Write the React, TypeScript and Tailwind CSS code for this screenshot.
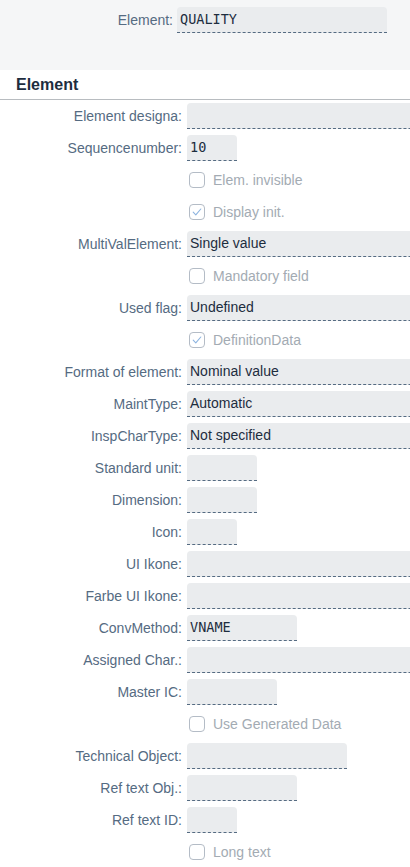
import React from "react";

const font = { fontFamily: '"Liberation Sans", Arial, sans-serif' };

function Label({ text }: { text: string }) {
  return (
    <div className="w-[183px] shrink-0 pr-[1px] text-right text-[14px] text-[#556b82] whitespace-nowrap">
      {text}
    </div>
  );
}

function Input({ value, w, mono }: { value?: string; w: string; mono?: boolean }) {
  return (
    <div
      className={`${w} shrink-0 ml-[4px] h-[26px] rounded-t-[4px] bg-[#eaecee] border-b border-dashed border-[#556b82] flex items-center pl-[3px] text-[#1d2d3e] ${
        mono ? "text-[14px]" : "text-[14px]"
      }`}
      style={mono ? { fontFamily: '"DejaVu Sans Mono", "Liberation Mono", monospace', fontSize: "13.5px" } : undefined}
    >
      {value}
    </div>
  );
}

function FieldRow({ label, value, w, mono }: { label: string; value?: string; w: string; mono?: boolean }) {
  return (
    <div className="h-[32px] flex items-center">
      <Label text={`${label}:`} />
      <Input value={value} w={w} mono={mono} />
    </div>
  );
}

function CheckRow({ label, checked }: { label: string; checked?: boolean }) {
  return (
    <div className="h-[32px] flex items-center">
      <div className="w-[189px] shrink-0" />
      <div className="w-[16px] h-[16px] rounded-[4px] border border-[#b4bcc6] bg-white flex items-center justify-center">
        {checked && (
          <svg width="12" height="12" viewBox="0 0 12 12">
            <path d="M2.2 6.2 L4.8 8.8 L9.8 3" fill="none" stroke="#8db4e0" strokeWidth="1.1" strokeLinecap="round" strokeLinejoin="round" />
          </svg>
        )}
      </div>
      <div className="ml-[8px] text-[14px] text-[#a3abb3]">{label}</div>
    </div>
  );
}

const WIDE = "w-[300px]";

export default function App() {
  return (
    <div className="w-[410px] h-[867px] overflow-hidden bg-white" style={font}>
      <div className="h-[70px] bg-[#f5f6f7] pt-[7px]">
        <div className="flex items-center h-[26px]">
          <div className="w-[173px] shrink-0 text-right text-[14px] text-[#556b82]">Element:</div>
          <div
            className="w-[210px] ml-[4px] h-[26px] rounded-t-[4px] bg-[#eaecee] border-b border-dashed border-[#556b82] flex items-center pl-[3px] text-[#1d2d3e]"
            style={{ fontFamily: '"DejaVu Sans Mono", "Liberation Mono", monospace', fontSize: "13.5px" }}
          >
            QUALITY
          </div>
        </div>
      </div>
      <div className="h-[30px] border-b border-[#b8bcc0] flex items-center pl-[16px] text-[16px] font-bold text-[#1d2d3e]">
        Element
      </div>
      <div className="flex flex-col">
        <FieldRow label="Element designa" w={WIDE} />
        <FieldRow label="Sequencenumber" value="10" w="w-[50px]" mono />
        <CheckRow label="Elem. invisible" />
        <CheckRow label="Display init." checked />
        <FieldRow label="MultiValElement" value="Single value" w={WIDE} />
        <CheckRow label="Mandatory field" />
        <FieldRow label="Used flag" value="Undefined" w={WIDE} />
        <CheckRow label="DefinitionData" checked />
        <FieldRow label="Format of element" value="Nominal value" w={WIDE} />
        <FieldRow label="MaintType" value="Automatic" w={WIDE} />
        <FieldRow label="InspCharType" value="Not specified" w={WIDE} />
        <FieldRow label="Standard unit" w="w-[70px]" />
        <FieldRow label="Dimension" w="w-[70px]" />
        <FieldRow label="Icon" w="w-[50px]" />
        <FieldRow label="UI Ikone" w={WIDE} />
        <FieldRow label="Farbe UI Ikone" w={WIDE} />
        <FieldRow label="ConvMethod" value="VNAME" w="w-[110px]" mono />
        <FieldRow label="Assigned Char." w={WIDE} />
        <FieldRow label="Master IC" w="w-[90px]" />
        <CheckRow label="Use Generated Data" />
        <FieldRow label="Technical Object" w="w-[160px]" />
        <FieldRow label="Ref text Obj." w="w-[110px]" />
        <FieldRow label="Ref text ID" w="w-[50px]" />
        <CheckRow label="Long text" />
      </div>
    </div>
  );
}
